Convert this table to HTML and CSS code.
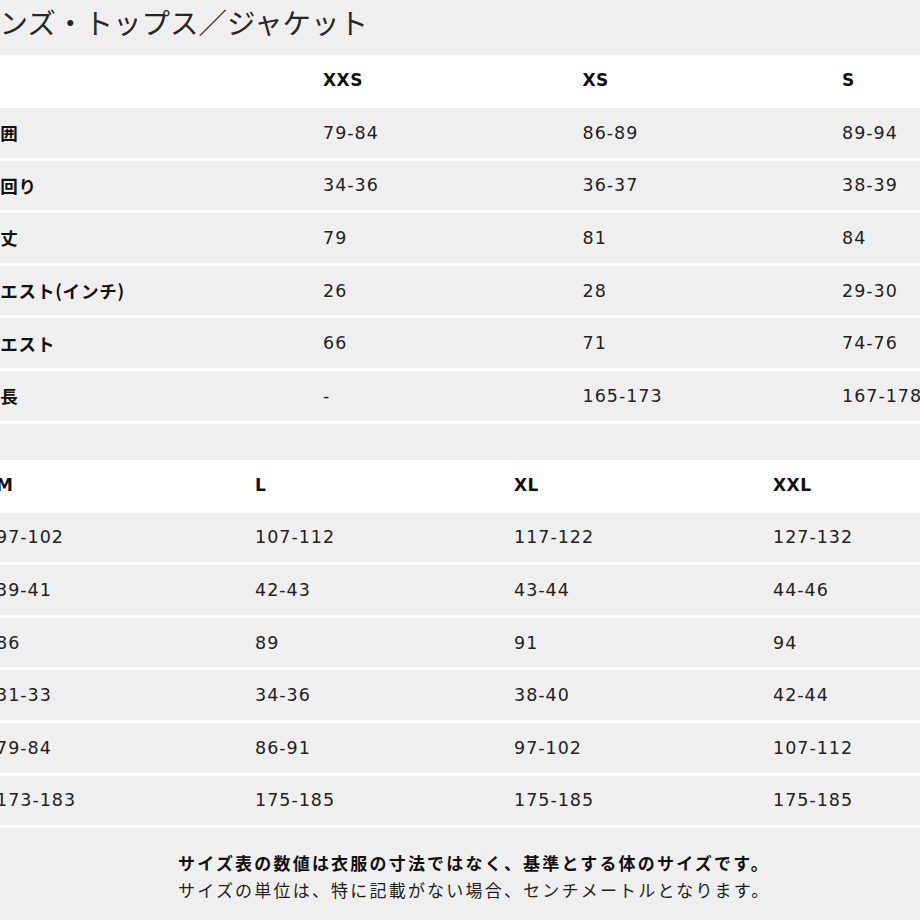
FILE: index.html
```html
<!DOCTYPE html>
<html lang="ja">
<head>
<meta charset="utf-8">
<title>サイズ表</title>
<link rel="stylesheet" href="styles.css">
</head>
<body>
<div class="page">
  <h1 class="title">メンズ・トップス／ジャケット</h1>

  <div class="chart chart-a">
    <div class="row head">
      <div class="cell label"></div>
      <div class="cell">XXS</div>
      <div class="cell">XS</div>
      <div class="cell">S</div>
    </div>
    <div class="row">
      <div class="cell label">胸囲</div>
      <div class="cell">79-84</div>
      <div class="cell">86-89</div>
      <div class="cell">89-94</div>
    </div>
    <div class="row">
      <div class="cell label">首回り</div>
      <div class="cell">34-36</div>
      <div class="cell">36-37</div>
      <div class="cell">38-39</div>
    </div>
    <div class="row">
      <div class="cell label">着丈</div>
      <div class="cell">79</div>
      <div class="cell">81</div>
      <div class="cell">84</div>
    </div>
    <div class="row">
      <div class="cell label">ウエスト(インチ)</div>
      <div class="cell">26</div>
      <div class="cell">28</div>
      <div class="cell">29-30</div>
    </div>
    <div class="row">
      <div class="cell label">ウエスト</div>
      <div class="cell">66</div>
      <div class="cell">71</div>
      <div class="cell">74-76</div>
    </div>
    <div class="row">
      <div class="cell label">身長</div>
      <div class="cell">-</div>
      <div class="cell">165-173</div>
      <div class="cell">167-178</div>
    </div>
  </div>

  <div class="chart chart-b">
    <div class="row head">
      <div class="cell">M</div>
      <div class="cell">L</div>
      <div class="cell">XL</div>
      <div class="cell">XXL</div>
    </div>
    <div class="row">
      <div class="cell">97-102</div>
      <div class="cell">107-112</div>
      <div class="cell">117-122</div>
      <div class="cell">127-132</div>
    </div>
    <div class="row">
      <div class="cell">39-41</div>
      <div class="cell">42-43</div>
      <div class="cell">43-44</div>
      <div class="cell">44-46</div>
    </div>
    <div class="row">
      <div class="cell">86</div>
      <div class="cell">89</div>
      <div class="cell">91</div>
      <div class="cell">94</div>
    </div>
    <div class="row">
      <div class="cell">31-33</div>
      <div class="cell">34-36</div>
      <div class="cell">38-40</div>
      <div class="cell">42-44</div>
    </div>
    <div class="row">
      <div class="cell">79-84</div>
      <div class="cell">86-91</div>
      <div class="cell">97-102</div>
      <div class="cell">107-112</div>
    </div>
    <div class="row">
      <div class="cell">173-183</div>
      <div class="cell">175-185</div>
      <div class="cell">175-185</div>
      <div class="cell">175-185</div>
    </div>
  </div>

  <div class="note">
    <p class="note-strong">サイズ表の数値は衣服の寸法ではなく、基準とする体のサイズです。</p>
    <p class="note-plain">サイズの単位は、特に記載がない場合、センチメートルとなります。</p>
  </div>
</div>
</body>
</html>
```

FILE: styles.css
```css
html, body {
  margin: 0;
  padding: 0;
  background: #efefef;
  overflow: hidden;
}

.page {
  width: 920px;
  height: 920px;
  overflow: hidden;
  color: #1e1e1e;
  font-family: "DejaVu Sans", "Noto Sans CJK JP", sans-serif;
}

.title {
  margin: 0 0 0 -29px;
  height: 55px;
  line-height: 44px;
  font-family: "Noto Sans CJK JP", sans-serif;
  font-weight: 400;
  font-size: 28.5px;
  color: #262626;
  white-space: nowrap;
}

.chart {
  display: flex;
  flex-direction: column;
  width: 1200px;
}

.row {
  display: grid;
  height: 49.6px;
  border-bottom: 3px solid #ffffff;
  background: #efefef;
  align-items: center;
}

.row.head {
  background: #ffffff;
  height: 50px;
}

.chart-a {
  margin-left: -20px;
}

.chart-a .row {
  grid-template-columns: 339px 259.5px 259.5px 259.5px;
}

.chart-b {
  margin-left: -8px;
  margin-top: 36px;
}

.chart-b .row {
  grid-template-columns: 259px 259px 259px 259px;
}

.cell {
  padding-left: 4px;
  font-size: 17.5px;
  letter-spacing: 1px;
  white-space: nowrap;
  color: #222;
}

.head .cell {
  font-weight: 700;
  font-size: 17px;
  letter-spacing: 0.5px;
  color: #111;
}

.cell.label {
  padding-left: 2px;
  font-family: "Noto Sans CJK JP", sans-serif;
  font-weight: 700;
  font-size: 17.5px;
  letter-spacing: 0.8px;
  color: #111;
}

.note {
  padding: 21px 0 0 178px;
  font-family: "Noto Sans CJK JP", sans-serif;
  font-size: 17px;
  line-height: 27px;
  letter-spacing: 2.2px;
  color: #1e1e1e;
}

.note p {
  margin: 0;
  white-space: nowrap;
}

.note-strong {
  font-weight: 700;
  color: #111;
}
```
